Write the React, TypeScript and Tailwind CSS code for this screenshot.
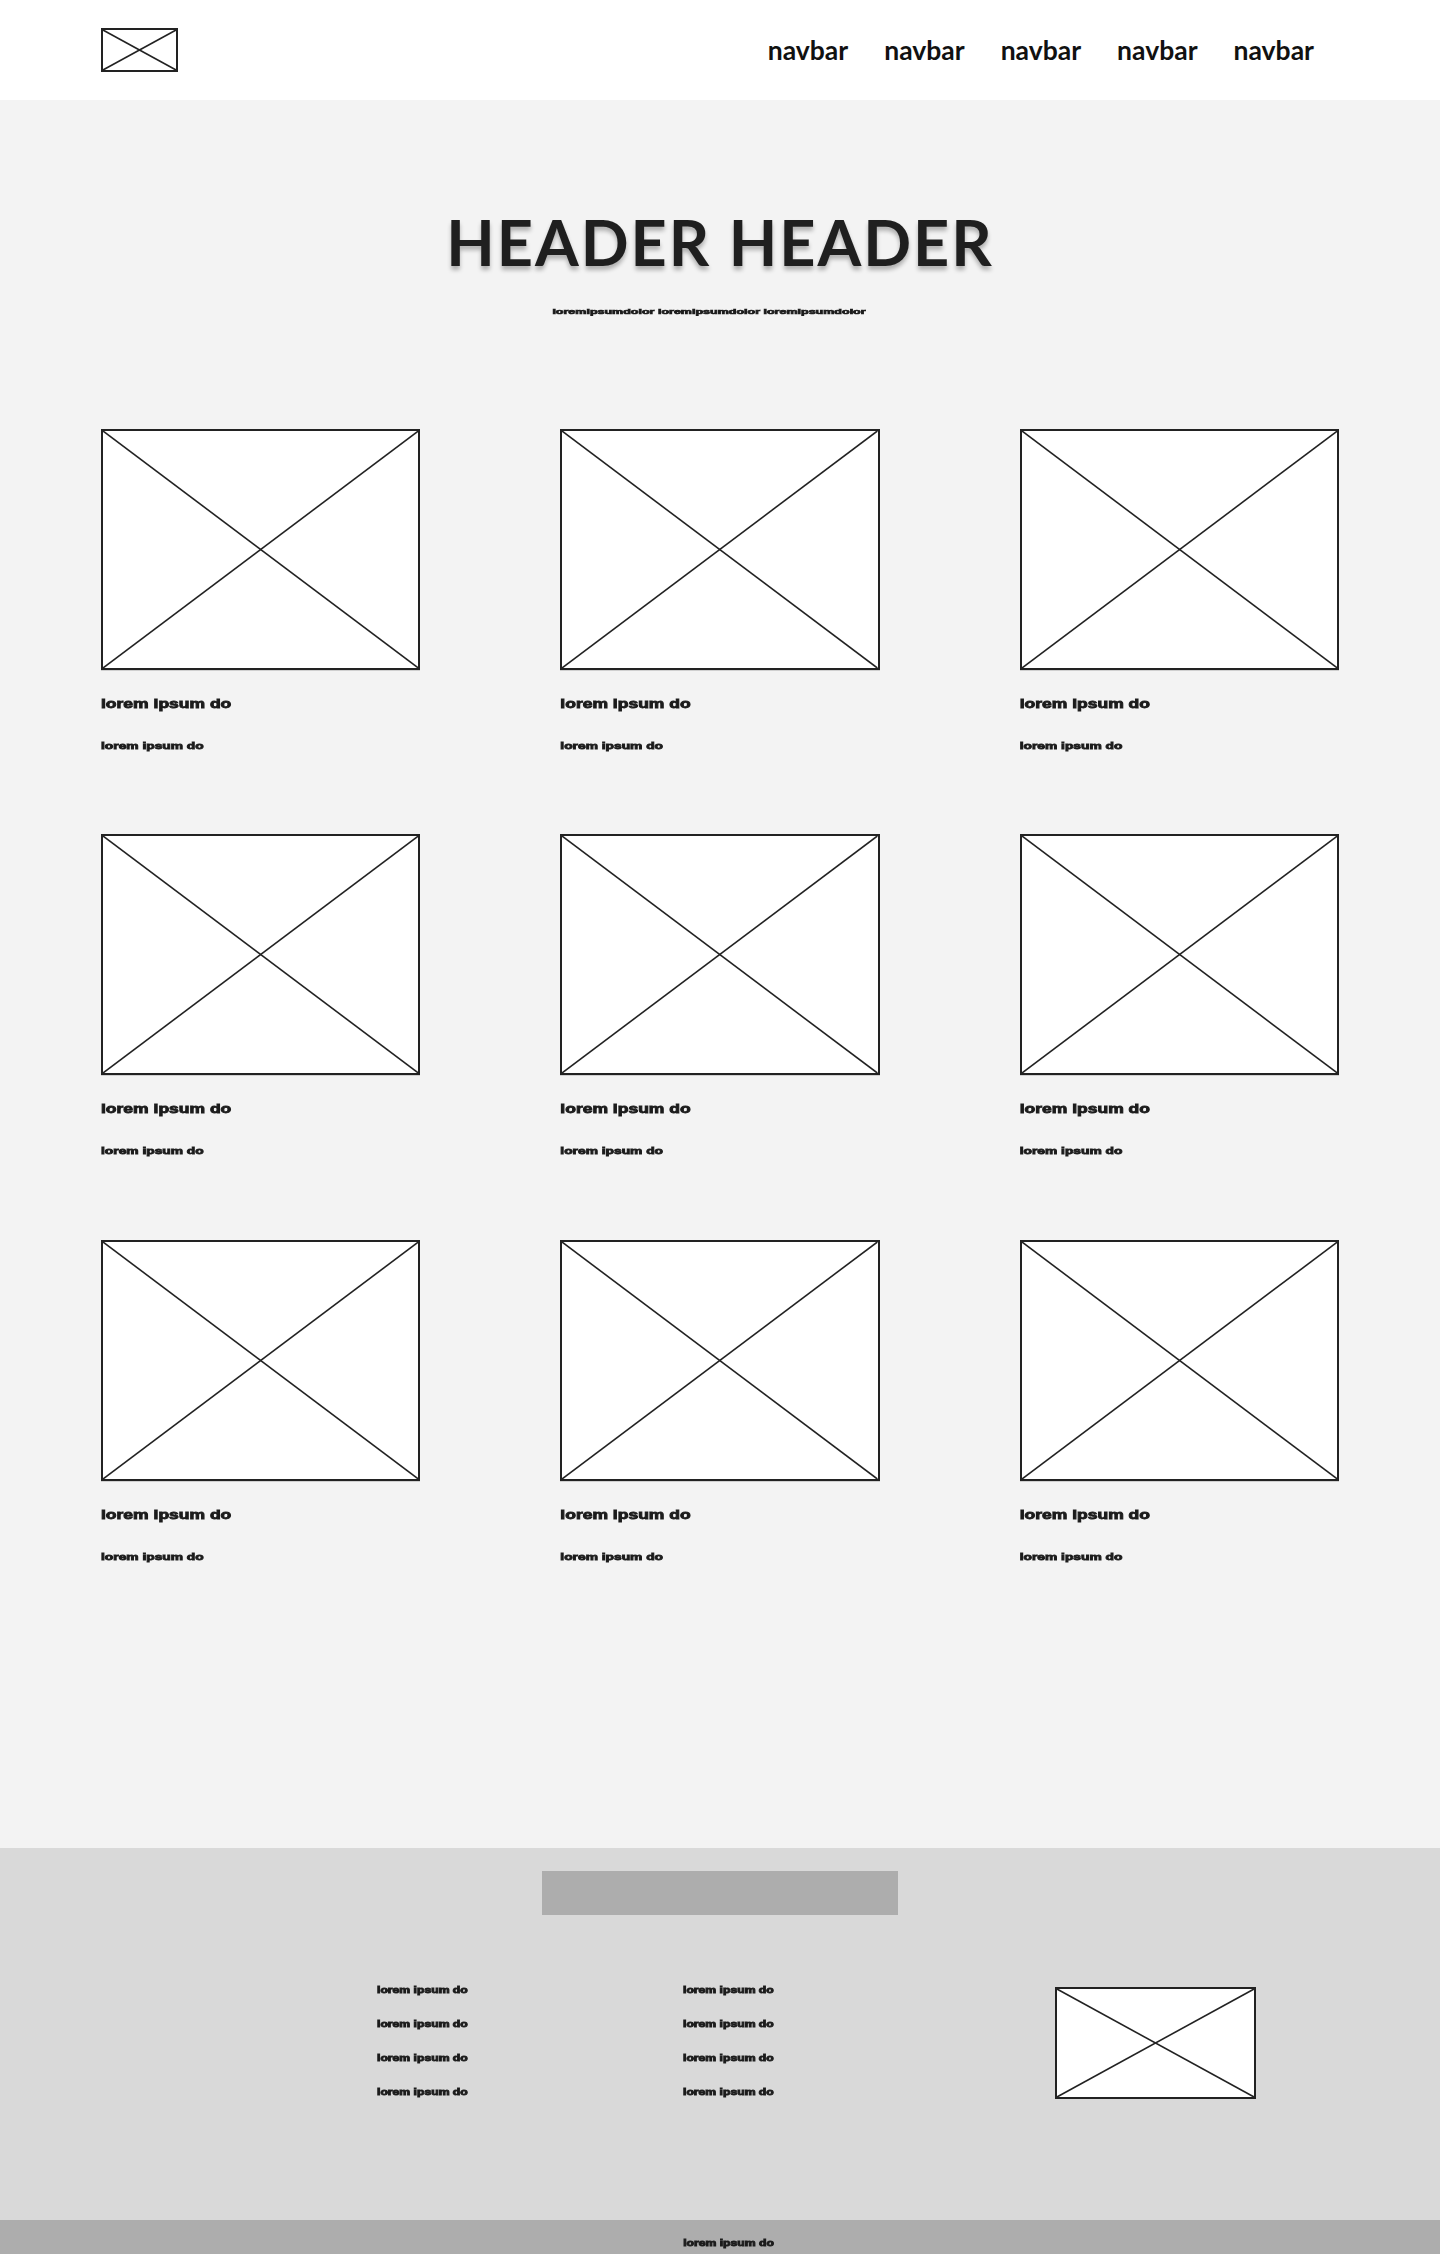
import React from 'react';

// crossed box placeholder used for every picture slot
const Placeholder: React.FC<{ className?: string }> = ({ className = '' }) => (
  <div className={`relative border-2 border-[#222222] bg-white ${className}`}>
    <svg className="absolute inset-0 h-full w-full" preserveAspectRatio="none" viewBox="0 0 100 100">
      <line x1="0" y1="0" x2="100" y2="100" stroke="#222222" strokeWidth="1.6" vectorEffect="non-scaling-stroke" />
      <line x1="100" y1="0" x2="0" y2="100" stroke="#222222" strokeWidth="1.6" vectorEffect="non-scaling-stroke" />
    </svg>
  </div>
);

// greeked text, drawn with a real font, squashed and smudged so it reads as a scribble
const Scribble: React.FC<{ children: React.ReactNode; className?: string }> = ({ children, className = '' }) => (
  <span
    className={`block origin-left whitespace-nowrap font-bold leading-none text-[#1c1c1c] blur-[0.6px] [-webkit-text-stroke:1.2px_#1c1c1c] font-['Liberation_Sans',Arial,sans-serif] ${className}`}
  >
    {children}
  </span>
);

const navItems = ['navbar', 'navbar', 'navbar', 'navbar', 'navbar'];
const cards = Array.from({ length: 9 }, (_, i) => i);
const footerLinks = ['lorem ipsum do', 'lorem ipsum do', 'lorem ipsum do', 'lorem ipsum do'];

export default function App() {
  return (
    <div className="min-h-screen w-[1440px] bg-[#f3f3f3] font-['Lato',sans-serif]">
      <header className="flex h-[100px] items-center justify-between bg-white pl-[101px] pr-[108px]">
        <Placeholder className="h-[44px] w-[77px]" />
        <nav className="flex">
          {navItems.map((item, i) => (
            <a key={i} href="#" className="px-[18px] text-[26.5px] font-bold leading-none text-[#111111]">
              {item}
            </a>
          ))}
        </nav>
      </header>

      <main className="pt-[110px] pb-[284px]">
        <h1 className="text-center text-[63px] font-bold leading-none tracking-[2px] text-[#1f1f1f] [text-shadow:0_4px_4px_rgba(0,0,0,0.28)]">
          HEADER HEADER
        </h1>
        <div className="mt-[32px] flex justify-center pr-[22px]">
          <Scribble className="origin-center scale-y-[0.6] text-[12.5px] [-webkit-text-stroke:0.8px_#1c1c1c]">
            loremipsumdolor loremipsumdolor loremipsumdolor
          </Scribble>
        </div>

        <div className="mt-[111px] grid grid-cols-3 gap-x-[140px] gap-y-[82px] px-[101px]">
          {cards.map((c) => (
            <div key={c} className="flex flex-col">
              <Placeholder className="h-[241px] w-full shadow-[0_1px_0_#cfcfcf]" />
              <Scribble className="mt-[26px] scale-y-[0.7] text-[17.5px]">lorem ipsum do</Scribble>
              <Scribble className="mt-[25.5px] scale-y-[0.7] text-[13.8px]">lorem ipsum do</Scribble>
            </div>
          ))}
        </div>
      </main>

      <footer className="bg-[#d9d9d9] pt-[23px] pb-[121px]">
        <div className="mx-auto h-[44px] w-[356px] bg-[#adadad]" />
        <div className="mt-[69px] flex items-start pl-[377px]">
          <ul className="flex w-[306px] flex-col gap-[21.8px]">
            {footerLinks.map((l, i) => (
              <li key={i}>
                <Scribble className="scale-y-[0.7] text-[12.2px]">{l}</Scribble>
              </li>
            ))}
          </ul>
          <ul className="flex w-[372px] flex-col gap-[21.8px]">
            {footerLinks.map((l, i) => (
              <li key={i}>
                <Scribble className="scale-y-[0.7] text-[12.2px]">{l}</Scribble>
              </li>
            ))}
          </ul>
          <Placeholder className="mt-[3px] h-[112px] w-[201px]" />
        </div>
      </footer>

      <div className="flex h-[35px] justify-center bg-[#adadad] pt-[16px] pl-[17px]">
        <Scribble className="scale-y-[0.7] text-[12.2px]">lorem ipsum do</Scribble>
      </div>
    </div>
  );
}
